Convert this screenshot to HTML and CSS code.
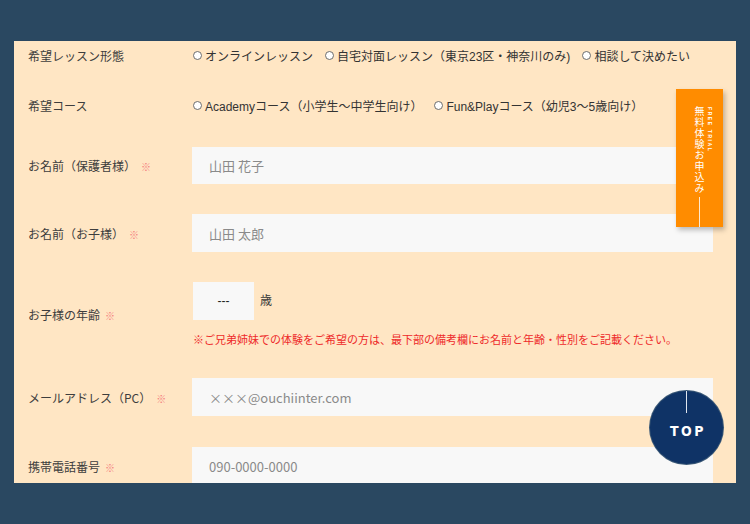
FILE: index.html
```html
<!DOCTYPE html>
<html lang="ja">
<head>
<meta charset="utf-8">
<link rel="stylesheet" href="styles.css">
</head>
<body>
<div class="panel">
  <div class="row r1">
    <div class="label">希望レッスン形態</div>
    <div class="field radios">
      <span class="opt"><span class="radio"></span>オンラインレッスン</span>
      <span class="opt"><span class="radio"></span>自宅対面レッスン（東京23区・神奈川のみ)</span>
      <span class="opt"><span class="radio"></span>相談して決めたい</span>
    </div>
  </div>
  <div class="row r2">
    <div class="label">希望コース</div>
    <div class="field radios">
      <span class="opt"><span class="radio"></span>Academyコース（小学生〜中学生向け）</span>
      <span class="opt"><span class="radio"></span>Fun&amp;Playコース（幼児3〜5歳向け）</span>
    </div>
  </div>
  <div class="row r3">
    <div class="label">お名前（保護者様）<span class="req">※</span></div>
    <div class="field"><div class="input">山田 花子</div></div>
  </div>
  <div class="row r4">
    <div class="label">お名前（お子様）<span class="req">※</span></div>
    <div class="field"><div class="input">山田 太郎</div></div>
  </div>
  <div class="row r5">
    <div class="label">お子様の年齢<span class="req">※</span></div>
    <div class="field">
      <div class="age"><div class="select">---</div><span class="unit">歳</span></div>
      <p class="note">※ご兄弟姉妹での体験をご希望の方は、最下部の備考欄にお名前と年齢・性別をご記載ください。</p>
    </div>
  </div>
  <div class="row r6">
    <div class="label">メールアドレス（PC）<span class="req">※</span></div>
    <div class="field"><div class="input">×××@ouchiinter.com</div></div>
  </div>
  <div class="row r7">
    <div class="label">携帯電話番号<span class="req">※</span></div>
    <div class="field"><div class="input">090-0000-0000</div></div>
  </div>
</div>

<a class="trial">
  <span class="trial-jp">無料体験お申込み</span>
  <span class="trial-en">FREE TRIAL</span>
  <span class="trial-line"></span>
</a>

<a class="top"><span class="top-line"></span><span class="top-text">TOP</span></a>
</body>
</html>
```
FILE: styles.css
```css
html, body {
  margin: 0;
  padding: 0;
}
body {
  background: #2a4861;
  width: 750px;
  height: 524px;
  overflow: hidden;
  font-family: "Liberation Sans", "Noto Sans CJK JP", sans-serif;
  color: #3a3a3a;
  position: relative;
}
.panel {
  margin: 41px 14px 0;
  width: 722px;
  height: 442px;
  background: #ffe6c4;
  overflow: hidden;
}
.row {
  display: flex;
  align-items: center;
}
.label {
  width: 164px;
  padding-left: 14px;
  font-size: 12px;
  font-family: "Noto Sans CJK JP", sans-serif;
  color: #3d3d3d;
  flex: none;
}
.req {
  color: #f47d7d;
  font-size: 10px;
  margin-left: 5px;
}
.field {
  width: 521px;
  flex: none;
}
.r1 { height: 28px; }
.r2 { height: 28px; margin-top: 22px; }
.r3 { height: 37px; margin-top: 28px; }
.r4 { height: 38px; margin-top: 30px; }
.r5 { margin-top: 30px; }
.r6 { height: 38px; margin-top: 31px; }
.r7 { height: 38px; margin-top: 31px; }

.radios {
  display: flex;
  font-size: 12px;
  color: #333;
  white-space: nowrap;
}
.opt {
  display: inline-flex;
  align-items: center;
  margin-right: 11px;
}
.radio {
  width: 7px;
  height: 7px;
  border: 1px solid #6d6d6d;
  border-radius: 50%;
  background: #fff;
  margin: 0 3px 0 1px;
}
.input {
  height: 100%;
  box-sizing: border-box;
  background: #f8f8f8;
  padding-left: 17px;
  display: flex;
  align-items: center;
  font-family: "Noto Sans CJK JP", sans-serif;
  font-size: 13px;
  color: #8a8a8a;
}
.r3 .field, .r4 .field, .r6 .field, .r7 .field { height: 100%; }

.age {
  display: flex;
  align-items: center;
}
.select {
  width: 61px;
  height: 38px;
  margin-left: 1px;
  background: #f8f8f8;
  display: flex;
  align-items: center;
  justify-content: center;
  font-size: 12px;
  color: #222;
}
.unit {
  font-size: 12px;
  margin-left: 6px;
  margin-top: -4px;
  font-family: "Noto Sans CJK JP", sans-serif;
}
.note {
  margin: 11px 0 0 1px;
  font-size: 11px;
  line-height: 16px;
  color: #ee2a2a;
  font-family: "Noto Sans CJK JP", sans-serif;
  white-space: nowrap;
}

.trial {
  position: absolute;
  left: 676px;
  top: 89px;
  width: 47px;
  height: 138px;
  background: #ff8c00;
  box-shadow: 2px 3px 5px rgba(0,0,0,0.25);
}
.trial-jp {
  position: absolute;
  left: 17px;
  top: 17px;
  writing-mode: vertical-rl;
  font-family: "Noto Sans CJK JP", sans-serif;
  font-size: 10px;
  letter-spacing: 1px;
  line-height: 12px;
  color: #fff;
}
.trial-en {
  position: absolute;
  left: 31px;
  top: 18px;
  writing-mode: vertical-rl;
  font-size: 5px;
  letter-spacing: 1.6px;
  font-weight: bold;
  color: #fff;
  font-family: "Liberation Sans", sans-serif;
}
.trial-line {
  position: absolute;
  left: 23px;
  top: 108px;
  width: 1px;
  height: 30px;
  background: rgba(255,255,255,0.8);
}

.top {
  position: absolute;
  left: 650px;
  top: 391px;
  width: 73px;
  height: 73px;
  border-radius: 50%;
  background: #0f3366;
  box-shadow: 0 0 0 1px #3a5876;
}
.top-line {
  position: absolute;
  left: 36px;
  top: 0;
  width: 1px;
  height: 22px;
  background: #dfe6ef;
}
.top-text {
  position: absolute;
  left: 0;
  right: 0;
  top: 32px;
  text-align: center;
  color: #fff;
  font-family: "DejaVu Sans Condensed", "DejaVu Sans", sans-serif;
  font-weight: bold;
  font-size: 14px;
  letter-spacing: 2.5px;
  padding-left: 3px;
  line-height: 16px;
}
```
